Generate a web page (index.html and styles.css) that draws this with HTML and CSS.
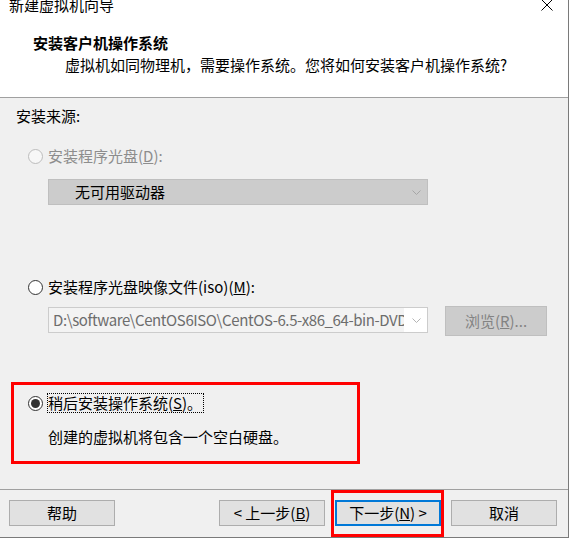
FILE: index.html
```html
<!DOCTYPE html>
<html lang="zh-CN">
<head>
<meta charset="utf-8">
<title>新建虚拟机向导</title>
<link rel="stylesheet" href="styles.css">
</head>
<body>
<div class="window">
  <header class="header">
    <div class="titlebar">
      <span class="title">新建虚拟机向导</span>
      <svg class="close" width="12" height="12" viewBox="0 0 12 12"><path d="M0.5 0.5L11.5 11.5M11.5 0.5L0.5 11.5" stroke="#000" stroke-width="1" fill="none"/></svg>
    </div>
    <div class="heading">安装客户机操作系统</div>
    <div class="subheading">虚拟机如同物理机，需要操作系统。您将如何安装客户机操作系统?</div>
  </header>
  <main class="content">
    <div class="section-label">安装来源:</div>
    <div class="option disabled opt-disc"><span class="radio"></span><span>安装程序光盘(<u>D</u>):</span></div>
    <div class="combo combo-disabled">
      <span class="combo-text">无可用驱动器</span>
      <svg class="arrow" width="9" height="5" viewBox="0 0 9 5"><path d="M0.5 0.5L4.5 4.5L8.5 0.5" stroke="#a6a6a6" fill="none"/></svg>
    </div>
    <div class="option opt-iso"><span class="radio"></span><span>安装程序光盘映像文件(iso)(<u>M</u>):</span></div>
    <div class="iso-row">
      <div class="combo combo-iso">
        <span class="combo-text">D:\software\CentOS6ISO\CentOS-6.5-x86_64-bin-DVD1.iso</span>
        <svg class="arrow" width="9" height="5" viewBox="0 0 9 5"><path d="M0.5 0.5L4.5 4.5L8.5 0.5" stroke="#b4b4b4" fill="none"/></svg>
      </div>
      <button class="btn btn-disabled btn-browse">浏览(<u>R</u>)...</button>
    </div>
    <div class="later-box">
      <div class="option opt-later"><span class="radio checked"></span><span class="focus">稍后安装操作系统(<u>S</u>)。</span></div>
      <div class="note">创建的虚拟机将包含一个空白硬盘。</div>
    </div>
  </main>
  <footer class="footer">
    <button class="btn">帮助</button>
    <div class="nav">
      <button class="btn">&lt; 上一步(<u>B</u>)</button>
      <span class="annot"><button class="btn btn-default">下一步(<u>N</u>) &gt;</button></span>
      <button class="btn">取消</button>
    </div>
  </footer>
</div>
</body>
</html>
```
FILE: styles.css
```css
html, body {
  margin: 0;
  padding: 0;
  background: #ffffff;
}
body {
  font-family: "Noto Sans CJK SC", "Noto Sans", sans-serif;
  font-size: 15px;
  color: #000;
}
.window {
  box-sizing: border-box;
  width: 569px;
  height: 538px;
  border-right: 1px solid #7a7a7a;
  border-bottom: 1px solid #7a7a7a;
  background: #f0f0f0;
  display: flex;
  flex-direction: column;
  overflow: hidden;
}
.header {
  box-sizing: border-box;
  height: 98px;
  background: #ffffff;
  border-bottom: 1px solid #a0a0a0;
}
.titlebar {
  height: 33px;
  display: flex;
  justify-content: space-between;
  align-items: flex-start;
  overflow: hidden;
}
.title {
  display: block;
  margin: -5px 0 0 9px;
  line-height: 20px;
}
.close {
  margin: -1px 15px 0 0;
}
.heading {
  margin-left: 33px;
  line-height: 20px;
  font-weight: bold;
}
.subheading {
  margin: 2px 0 0 65px;
  line-height: 20px;
}
.content {
  box-sizing: border-box;
  height: 391px;
  padding-top: 8px;
}
.section-label {
  margin-left: 16px;
  line-height: 20px;
}
.option {
  display: flex;
  align-items: center;
  height: 20px;
  padding-left: 28px;
  gap: 5px;
  line-height: 20px;
}
.option.disabled {
  color: #8d8d8d;
}
.radio {
  box-sizing: border-box;
  width: 15px;
  height: 15px;
  border-radius: 50%;
  border: 1px solid #333333;
  background: #ffffff;
  display: flex;
  align-items: center;
  justify-content: center;
  flex: none;
}
.disabled .radio {
  border-color: #bcbcbc;
  background: #f7f7f7;
}
.radio.checked {
  border: 1.5px solid #333333;
}
.radio.checked::after {
  content: "";
  width: 9px;
  height: 9px;
  border-radius: 50%;
  background: #333333;
}
.opt-disc {
  margin-top: 20px;
}
.combo {
  box-sizing: border-box;
  width: 380px;
  height: 26px;
  display: flex;
  align-items: center;
}
.combo-disabled {
  margin: 13px 0 0 48px;
  background: #cccccc;
  border: 1px solid #bfbfbf;
}
.combo-disabled .combo-text {
  flex: 1;
  padding-left: 26px;
  line-height: 24px;
}
.combo .arrow {
  margin: 0 6px 0 4px;
  flex: none;
}
.opt-iso {
  margin-top: 72px;
}
.iso-row {
  display: flex;
  align-items: flex-start;
  margin-top: 9px;
}
.combo-iso {
  margin: 1px 0 0 48px;
  background: #ffffff;
  border: 1px solid #cccccc;
  align-items: stretch;
}
.combo-iso .combo-text {
  flex: 1;
  min-width: 0;
  overflow: hidden;
  white-space: nowrap;
  background: #f3f3f3;
  color: #6d6d6d;
  padding-left: 4px;
  line-height: 24px;
  letter-spacing: -0.4px;
}
.combo-iso .arrow {
  align-self: center;
  margin: 0 6px 0 8px;
}
.btn {
  box-sizing: border-box;
  width: 106px;
  height: 26px;
  padding: 0;
  margin: 0;
  background: #e1e1e1;
  border: 1px solid #adadad;
  font-family: inherit;
  font-size: 15px;
  line-height: 22px;
  color: #000;
}
.btn-disabled {
  background: #cccccc;
  border-color: #bfbfbf;
  color: #838383;
}
.btn-browse {
  width: 102px;
  height: 30px;
  margin-left: 17px;
}
.later-box {
  box-sizing: border-box;
  width: 349px;
  height: 82px;
  margin: 46px 0 0 11px;
  border: 3px solid #ff0000;
  padding: 8px 0 0 14px;
}
.opt-later {
  padding-left: 0;
  gap: 4px;
}
.focus {
  box-sizing: border-box;
  height: 20px;
  line-height: 18px;
  border: 1px dotted #000;
  padding: 0 1px 0 0;
}
.note {
  margin-top: 14px;
  padding-left: 20px;
  line-height: 20px;
}
.footer {
  flex: 1;
  border-top: 1px solid #a0a0a0;
  display: flex;
  justify-content: space-between;
  align-items: flex-start;
  padding: 10px 11px 0 9px;
}
.nav {
  display: flex;
  gap: 10px;
}
.annot {
  position: relative;
  display: block;
}
.annot::after {
  content: "";
  position: absolute;
  top: -10px;
  left: -4px;
  right: -3px;
  bottom: -11px;
  border: 3px solid #ff0000;
  pointer-events: none;
}
.btn-default {
  border: 2px solid #0078d7;
}
```
